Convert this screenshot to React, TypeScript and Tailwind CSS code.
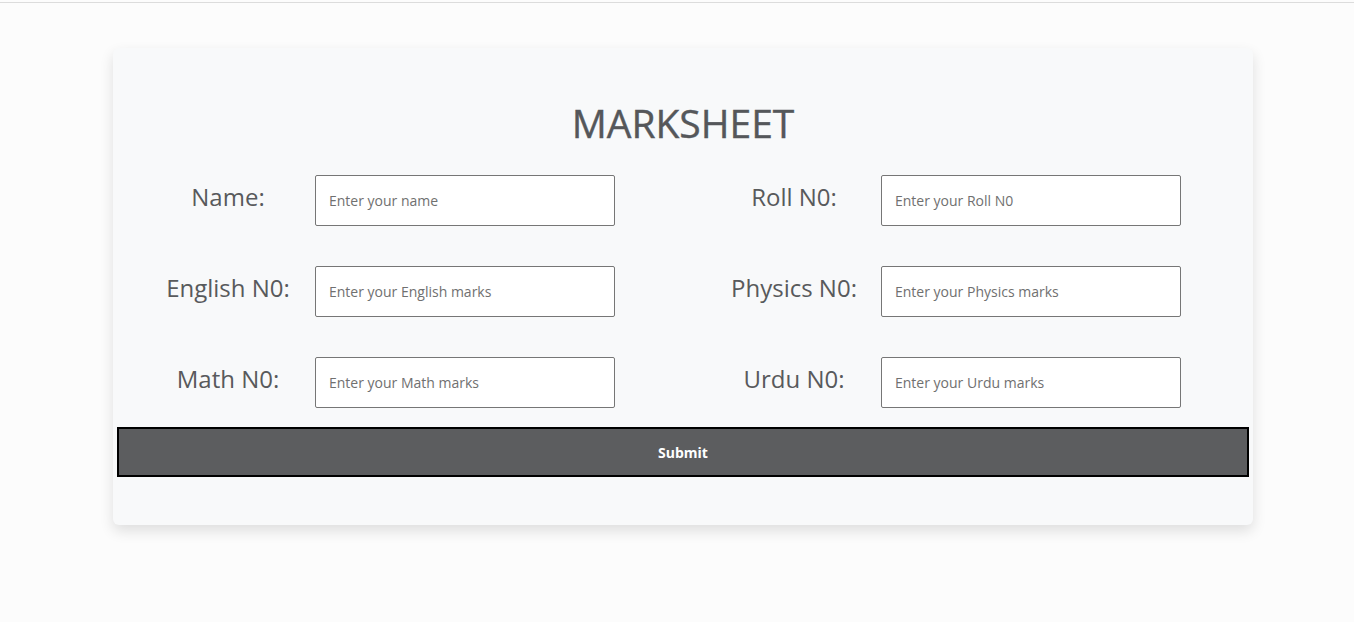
import { useState } from "react"

const fields = [
  { label: "Name:", placeholder: "Enter your name", key: "name" },
  { label: "Roll N0:", placeholder: "Enter your Roll N0", key: "roll" },
  { label: "English N0:", placeholder: "Enter your English marks", key: "english" },
  { label: "Physics N0:", placeholder: "Enter your Physics marks", key: "physics" },
  { label: "Math N0:", placeholder: "Enter your Math marks", key: "math" },
  { label: "Urdu N0:", placeholder: "Enter your Urdu marks", key: "urdu" },
]

export default function App() {
  const [values, setValues] = useState<Record<string, string>>({})

  return (
    <div className="min-h-[622px] bg-[#fcfcfc] pt-[2px] font-['Open_Sans',sans-serif]">
      <div className="border-t border-[#dcdcdc]" />
      <div className="ml-[113px] mt-[45px] w-[1140px] rounded-md bg-[#f8f9fa] p-1 pb-[48px] shadow-[0_6px_14px_rgba(0,0,0,0.12)]">
        <h1 className="mt-[47px] text-center text-[39px] leading-[48px] text-[#55575a] [-webkit-text-stroke:0.4px_#55575a]">
          MARKSHEET
        </h1>
        <div className="mt-[28px] ml-[24px] grid grid-cols-[540px_540px] gap-x-[26px] gap-y-[40px]">
          {fields.map((f) => (
            <div key={f.key} className="flex items-center">
              <label className="-mt-[7px] w-[174px] text-center text-[24px] text-[#585a5c]">
                {f.label}
              </label>
              <input
                className="h-[51px] w-[300px] rounded-[2px] border border-[#767676] bg-white pl-[13px] text-[14px] text-[#333] placeholder:text-[#707070] outline-none"
                placeholder={f.placeholder}
                value={values[f.key] ?? ""}
                onChange={(e) => setValues({ ...values, [f.key]: e.target.value })}
              />
            </div>
          ))}
        </div>
        <button className="mt-[19px] h-[50px] w-full border-2 border-black bg-[#5c5d5f] text-[14px] font-bold text-white">
          Submit
        </button>
      </div>
    </div>
  )
}
